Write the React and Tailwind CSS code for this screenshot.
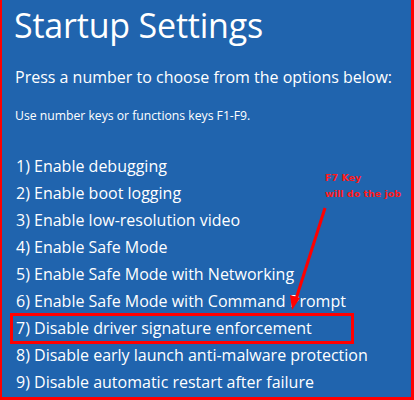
const options = [
  '1) Enable debugging',
  '2) Enable boot logging',
  '3) Enable low-resolution video',
  '4) Enable Safe Mode',
  '5) Enable Safe Mode with Networking',
  '6) Enable Safe Mode with Command Prompt',
  '7) Disable driver signature enforcement',
  '8) Disable early launch anti-malware protection',
  '9) Disable automatic restart after failure',
];

export default function App() {
  return (
    <div className="relative w-[414px] h-[400px] overflow-hidden bg-[#2064ae] border-l-2 border-r-[3px] border-b-[3px] border-[#ff0000] text-white font-['Open_Sans',sans-serif]">
      <div className="h-full pl-[12px] pt-[3px]">
        <h1 className="text-[34px] leading-[44px] font-normal tracking-[-0.2px]">Startup Settings</h1>
        <p className="mt-[18px] text-[16px] leading-[24px] pl-[1px]">Press a number to choose from the options below:</p>
        <p className="mt-[18px] text-[12.2px] leading-[18px] pl-[1px]">Use number keys or functions keys F1-F9.</p>
        <ul className="mt-[28px] flex flex-col">
          {options.map((o, i) => (
            <li
              key={o}
              className={`text-[16px] leading-[27px] pl-[2px] ${
                i === 6 ? 'outline-[3px] outline-solid outline-[#ff0000] -outline-offset-1 w-[340px] ml-[-2px] pl-[4px]' : ''
              }`}
            >
              {o}
            </li>
          ))}
        </ul>
      </div>

      <div className="absolute left-[323px] top-[170px] text-[#ff1a1a] font-['DejaVu_Sans',sans-serif] font-bold text-[9.5px] leading-[16px]">
        <div>F7 Key</div>
        <div>will do the job</div>
      </div>

      <svg className="absolute left-0 top-0" width="414" height="400" viewBox="0 0 414 400">
        <line x1="323" y1="208" x2="294" y2="299" stroke="#ff0000" strokeWidth="3" />
        <polygon points="290,310 288,295 298,298" fill="#ff0000" />
      </svg>
    </div>
  );
}
